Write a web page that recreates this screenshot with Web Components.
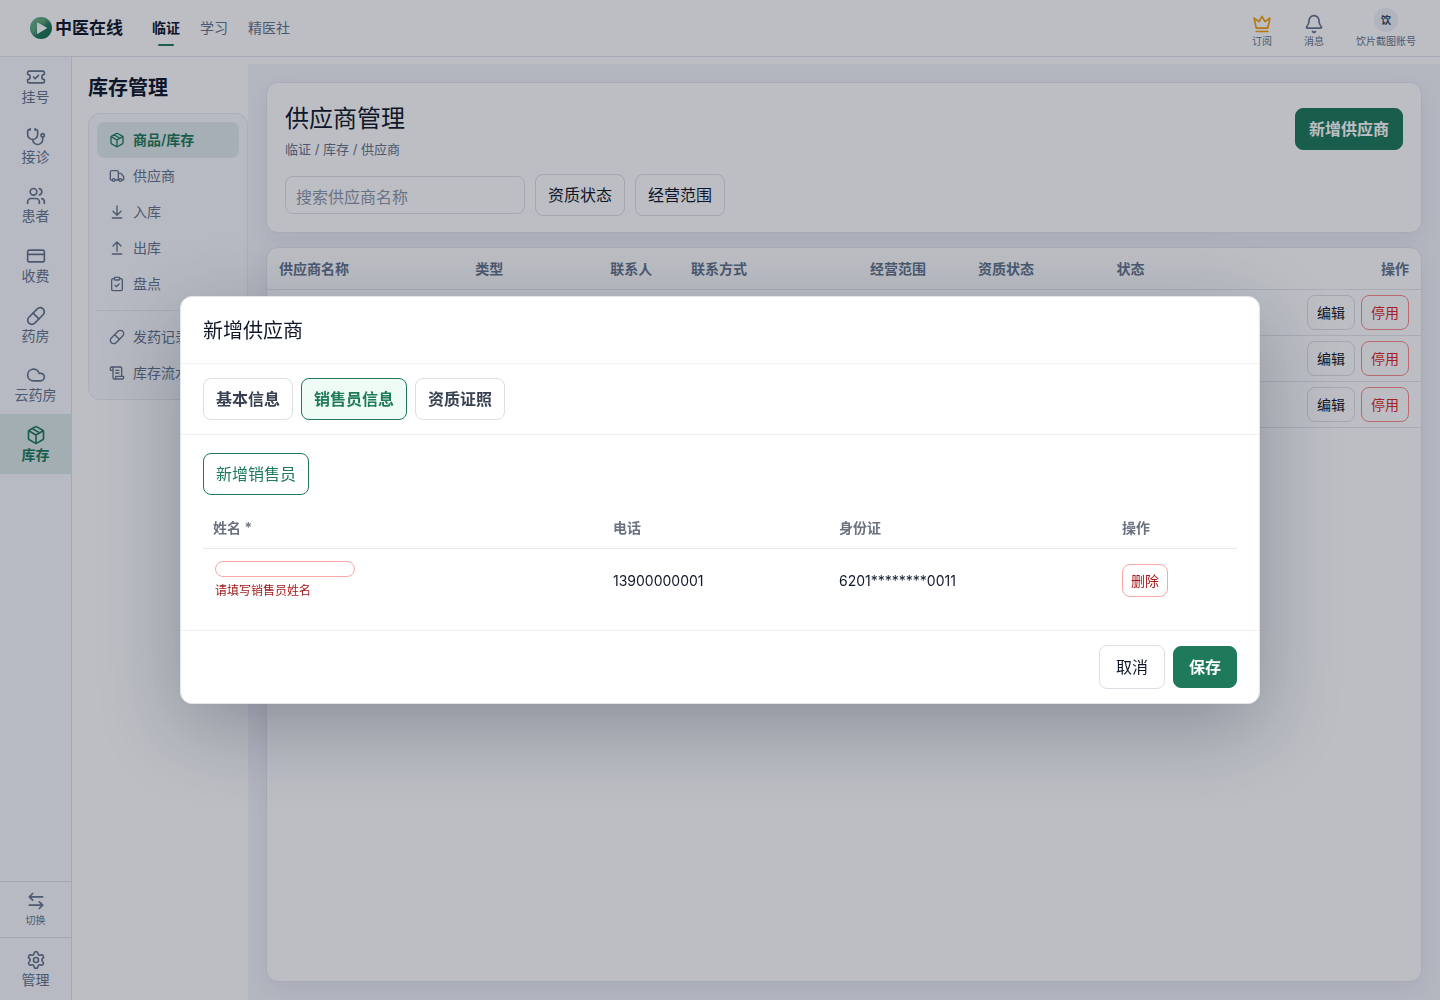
<!DOCTYPE html>
<html lang="zh-CN">
<head>
<meta charset="utf-8">
<title>供应商管理</title>
<style>
html,body{margin:0;background:#fff}
body{font-family:Inter,"Noto Sans CJK SC",sans-serif;font-size:14px;color:#0f172a}
</style>
</head>
<body>
<app-shell></app-shell>
<script>
const ICONS={
ticket:'<path d="M2 9a3 3 0 0 1 0 6v2a2 2 0 0 0 2 2h16a2 2 0 0 0 2-2v-2a3 3 0 0 1 0-6V7a2 2 0 0 0-2-2H4a2 2 0 0 0-2 2Z"/><path d="m9 12 2 2 4-4"/>',
stethoscope:'<path d="M11 2v2M5 2v2M5 3H4a2 2 0 0 0-2 2v4a6 6 0 0 0 12 0V5a2 2 0 0 0-2-2h-1M8 15a6 6 0 0 0 12 0v-3"/><circle cx="20" cy="10" r="2"/>',
users:'<path d="M16 21v-2a4 4 0 0 0-4-4H6a4 4 0 0 0-4 4v2M16 3.128a4 4 0 0 1 0 7.744M22 21v-2a4 4 0 0 0-3-3.87"/><circle cx="9" cy="7" r="4"/>',
card:'<rect x="2" y="5" width="20" height="14" rx="2"/><path d="M2 10h20"/>',
pill:'<path d="m10.5 20.5 10-10a4.95 4.95 0 1 0-7-7l-10 10a4.95 4.95 0 1 0 7 7Z"/><path d="m8.5 8.5 7 7"/>',
cloud:'<path d="M17.5 19H9a7 7 0 1 1 6.71-9h1.79a4.5 4.5 0 1 1 0 9Z"/>',
box:'<path d="M11 21.73a2 2 0 0 0 2 0l7-4A2 2 0 0 0 21 16V8a2 2 0 0 0-1-1.73l-7-4a2 2 0 0 0-2 0l-7 4A2 2 0 0 0 3 8v8a2 2 0 0 0 1 1.73z"/><path d="M12 22V12M3.29 7 12 12l8.71-5M7.5 4.27l9 5.15"/>',
truck:'<path d="M14 18V6a2 2 0 0 0-2-2H4a2 2 0 0 0-2 2v11a1 1 0 0 0 1 1h2M15 18H9M19 18h2a1 1 0 0 0 1-1v-3.65a1 1 0 0 0-.22-.624l-3.48-4.35A1 1 0 0 0 17.52 8H14"/><circle cx="17" cy="18" r="2"/><circle cx="7" cy="18" r="2"/>',
down:'<path d="M12 17V3M6 11l6 6 6-6M19 21H5"/>',
up:'<path d="m18 9-6-6-6 6M12 3v14M5 21h14"/>',
clipboard:'<rect x="8" y="2" width="8" height="4" rx="1"/><path d="M16 4h2a2 2 0 0 1 2 2v14a2 2 0 0 1-2 2H6a2 2 0 0 1-2-2V6a2 2 0 0 1 2-2h2M9 14l2 2 4-4"/>',
scroll:'<path d="M15 12h-5M15 8h-5M19 17V5a2 2 0 0 0-2-2H4M8 21h12a2 2 0 0 0 2-2v-1a1 1 0 0 0-1-1H11a1 1 0 0 0-1 1v1a2 2 0 1 1-4 0V5a2 2 0 1 0-4 0v2a1 1 0 0 0 1 1h3"/>',
bell:'<path d="M10.268 21a2 2 0 0 0 3.464 0M3.262 15.326A1 1 0 0 0 4 17h16a1 1 0 0 0 .74-1.673C19.41 13.956 18 12.499 18 8A6 6 0 0 0 6 8c0 4.499-1.411 5.956-2.738 7.326"/>',
crown:'<path d="M12 2.800l3.600 6.400 5.900-4.200-2.600 12H5.100L2.500 5l5.900 4.200z"/><path d="M5 21h14"/>',
swap:'<path d="M8 3 4 7l4 4M4 7h16M16 21l4-4-4-4M20 17H4"/>',
gear:'<path d="M9.671 4.136a2.34 2.34 0 0 1 4.659 0 2.34 2.34 0 0 0 3.319 1.915 2.34 2.34 0 0 1 2.33 4.033 2.34 2.34 0 0 0 0 3.831 2.34 2.34 0 0 1-2.33 4.033 2.34 2.34 0 0 0-3.319 1.915 2.34 2.34 0 0 1-4.659 0 2.34 2.34 0 0 0-3.32-1.915 2.34 2.34 0 0 1-2.33-4.033 2.34 2.34 0 0 0 0-3.831A2.34 2.34 0 0 1 6.35 6.051a2.34 2.34 0 0 0 3.319-1.915"/><circle cx="12" cy="12" r="3"/>'
};
function define(name,html){
  customElements.define(name,class extends HTMLElement{
    connectedCallback(){
      if(this.shadowRoot)return;
      const t=document.createElement('template');
      t.innerHTML=typeof html==='function'?html(this):html;
      this.attachShadow({mode:'open'}).append(t.content.cloneNode(true));
    }
  });
}

define('line-icon',el=>`<style>
:host{display:block;flex:none;width:var(--icon,20px);height:var(--icon,20px)}
svg{display:block;width:100%;height:100%;fill:none;stroke:currentColor;stroke-width:${el.getAttribute('weight')||2};stroke-linecap:round;stroke-linejoin:round}
</style><svg viewBox="0 0 24 24" aria-hidden="true">${ICONS[el.getAttribute('name')]}</svg>`);

/* Button: kinds are plain, primary, outline, danger, remove; sizes md, lg, sm, xs */
define('ui-button',`<style>
:host{display:block;flex:none}
button{display:block;box-sizing:border-box;margin:0;font:inherit;font-size:16px;line-height:24px;padding:8px 12px;border:1px solid #dcdfe6;border-radius:8px;background:#fff;color:#0f172a;white-space:nowrap}
:host([kind=primary]) button{border-color:#1e7a5a;background:#1e7a5a;color:#fff;font-weight:700;padding:8px 13px}
:host([kind=outline]) button{border-color:#1e7a5a;color:#1e7a5a}
:host([kind=danger]) button{border-color:#f98c8c;color:#dc2626}
:host([kind=remove]) button{border-color:#fca5a5;color:#a31b1b}
:host([size=lg]) button{padding:9px 16px}
:host([kind=primary][size=lg]) button{padding:8px 15px}
:host([size=sm]) button{font-size:14px;line-height:21px;padding:6px 9px}
:host([size=xs]) button{font-size:14px;line-height:21px;padding:5px 8px}
:host([tab]) button{font-weight:600;color:#374151}
:host([tab][on]) button{border-color:#1e7a5a;background:#effcf5;color:#1e7a5a}
</style><button type="button"><slot></slot></button>`);

define('brand-logo',`<style>
:host{display:flex;align-items:center;gap:3px;font-size:17px;font-weight:600;line-height:24px;margin-right:29px}
svg{display:block;width:22px;height:22px}
</style><svg viewBox="0 0 22 22" aria-hidden="true">
<defs><linearGradient id="g" x1="0" y1="0" x2="1" y2="1"><stop offset="0" stop-color="#6fbf9b"/><stop offset=".4" stop-color="#4ea37e"/><stop offset=".6" stop-color="#1e7a5a"/><stop offset="1" stop-color="#176a4d"/></linearGradient></defs>
<circle cx="11" cy="11" r="11" fill="url(#g)"/><path d="M7.500 6v10.400L16.500 11z" fill="#fff" stroke="#fff" stroke-width="1" stroke-linejoin="round"/>
<g fill="#f59e0b"><circle cx="4" cy="7" r=".6"/><circle cx="3" cy="10" r=".6"/><circle cx="5" cy="12" r=".6"/><circle cx="3.500" cy="14" r=".6"/><circle cx="7" cy="4" r=".6"/><circle cx="10" cy="3" r=".6"/><circle cx="13" cy="3" r=".6"/><circle cx="5.500" cy="16" r=".6"/><circle cx="5.500" cy="9" r=".5"/><circle cx="14.500" cy="5" r=".5"/></g>
</svg><span><slot></slot></span>`);

define('top-link',`<style>
:host{display:block}
a{display:block;position:relative;font-size:14px;line-height:56px;color:#64748b;text-decoration:none}
:host([on]) a{color:#0f172a;font-weight:700}
:host([on]) a::after{content:"";position:absolute;left:6px;right:6px;bottom:10px;height:2px;border-radius:1px;background:#1e7a5a}
</style><a href="#"><slot></slot></a>`);

define('top-action',`<style>
:host{display:block}
button{display:flex;flex-direction:column;align-items:center;margin:0;padding:0;border:0;background:none;font:inherit;font-size:10px;line-height:14px;color:#64748b}
.mark{display:flex;align-items:flex-end;height:26px;color:#64748b}
:host([gold]) .mark{color:#f59e0b}
</style><button type="button"><span class="mark"><slot name="mark"></slot></span><span><slot></slot></span></button>`);

define('user-avatar',`<style>
:host{display:flex;align-items:center;justify-content:center;width:24px;height:24px;margin-bottom:2px;border-radius:50%;background:#eef2f7;color:#334155;font-size:10px;font-weight:700;line-height:14px}
</style><slot></slot>`);

define('top-bar',`<style>
:host{display:block;border-bottom:1px solid #dfe5ee;background:#fff}
header{display:flex;align-items:center;justify-content:space-between;height:56px;padding:0 24px 0 30px}
.left,nav,.right{display:flex;align-items:center}
nav{gap:20px}
.right{gap:32px}
</style><header><div class="left"><brand-logo>中医在线</brand-logo>
<nav><top-link on>临证</top-link><top-link>学习</top-link><top-link>精医社</top-link></nav></div>
<div class="right">
<top-action gold><line-icon slot="mark" name="crown"></line-icon>订阅</top-action>
<top-action><line-icon slot="mark" name="bell"></line-icon>消息</top-action>
<top-action><user-avatar slot="mark">饮</user-avatar>饮片截图账号</top-action>
</div></header>`);

define('rail-item',el=>`<style>
:host{display:grid}
a{display:flex;flex-direction:column;align-items:center;justify-content:center;gap:1px;font-size:14px;line-height:18px;color:#64748b;text-decoration:none}
:host([on]) a{background:rgba(30,122,90,.13);color:#1e7a5a;font-weight:600}
:host([small]) a{font-size:10px;line-height:16px}
</style><a href="#"><line-icon name="${el.getAttribute('icon')}"></line-icon><span><slot></slot></span></a>`);

define('side-rail',`<style>
:host{display:flex;flex-direction:column;justify-content:space-between;width:71px;flex:none;border-right:1px solid #dde3ec;background:#f8fafc}
.main{display:grid;grid-auto-rows:1fr;min-height:417px}
.foot rail-item{border-top:1px solid #dbe2eb}
.foot rail-item:first-child{height:55px}
.foot rail-item:last-child{height:62px}
</style><nav class="main">
<rail-item icon="ticket">挂号</rail-item><rail-item icon="stethoscope">接诊</rail-item><rail-item icon="users">患者</rail-item><rail-item icon="card">收费</rail-item><rail-item icon="pill">药房</rail-item><rail-item icon="cloud">云药房</rail-item><rail-item icon="box" on>库存</rail-item></nav>
<nav class="foot"><rail-item icon="swap" small>切换</rail-item><rail-item icon="gear">管理</rail-item></nav>`);

define('menu-item',el=>`<style>
:host{display:block;--icon:16px}
a{display:flex;align-items:center;gap:8px;height:36px;padding:0 12px;border-radius:8px;font-size:14px;line-height:20px;color:#64748b;text-decoration:none}
:host([on]) a{background:rgba(30,122,90,.11);color:#1e7a5a;font-weight:600}
</style><a href="#"><line-icon name="${el.getAttribute('icon')}"></line-icon><span><slot></slot></span></a>`);

define('side-menu',`<style>
:host{display:block;box-sizing:border-box;width:176px;flex:none;padding:16px 0 0 16px;background:#fff}
h2{margin:0 0 10px;font-size:20px;line-height:30px;font-weight:600}
nav{padding:8px;border:1px solid #e6eaf0;border-radius:12px;background:#f9fafc}
hr{margin:8px 0;border:0;height:1px;background:#e2e8f0}
</style><h2>库存管理</h2><nav>
<menu-item icon="box" on>商品/库存</menu-item><menu-item icon="truck">供应商</menu-item><menu-item icon="down">入库</menu-item><menu-item icon="up">出库</menu-item><menu-item icon="clipboard">盘点</menu-item>
<hr><menu-item icon="pill">发药记录</menu-item><menu-item icon="scroll">库存流水</menu-item></nav>`);

define('page-card',`<style>
:host{display:block;border:1px solid #e2e5ee;border-radius:12px;background:#fff;box-shadow:0 8px 24px rgba(15,23,42,.06);overflow:hidden}
</style><slot></slot>`);

define('supplier-toolbar',`<style>
:host{display:block;padding:16px 18px}
.head{display:flex;align-items:center;justify-content:space-between;margin-bottom:15px}
h1{margin:0;padding-top:2px;font-size:24px;line-height:36px;font-weight:400}
p{margin:2px 0 0;font-size:13px;line-height:20px;color:#64748b}
.filters{display:flex;align-items:center;gap:10px}
input{box-sizing:border-box;width:240px;height:38px;margin:0;padding:3px 10px 0;border:1px solid #dcdfe6;border-radius:8px;background:#fff;font:inherit;font-size:16px;color:#0f172a}
input::placeholder{color:#8e98a8;opacity:1}
</style><div class="head"><div><h1>供应商管理</h1><p>临证 / 库存 / 供应商</p></div><ui-button kind="primary">新增供应商</ui-button></div>
<div class="filters"><input type="search" aria-label="搜索供应商名称" placeholder="搜索供应商名称"><ui-button>资质状态</ui-button><ui-button>经营范围</ui-button></div>`);

define('supplier-table',()=>{
const row='<tr>'+'<td></td>'.repeat(7)+'<td><div class="ops"><ui-button size="sm">编辑</ui-button><ui-button size="sm" kind="danger">停用</ui-button></div></td></tr>';
return `<style>
:host{display:block}
table{width:100%;table-layout:fixed;border-collapse:separate;border-spacing:0}
th,td{box-sizing:border-box;padding:0 12px;border-bottom:1px solid #e5e7ee;text-align:left}
th{height:42px;font-size:14px;line-height:20px;font-weight:600;color:#64748b}
th:last-child{text-align:right}
td{height:46px}
.ops{display:flex;justify-content:flex-end;gap:6px}
</style><table><colgroup><col style="width:17%"><col style="width:135px"><col style="width:7%"><col style="width:179px"><col style="width:108px"><col style="width:12%"><col style="width:12%"><col></colgroup>
<thead><tr><th>供应商名称</th><th>类型</th><th>联系人</th><th>联系方式</th><th>经营范围</th><th>资质状态</th><th>状态</th><th>操作</th></tr></thead>
<tbody>${row.repeat(3)}</tbody></table>`;});

define('supplier-dialog',`<style>
:host{display:block;box-sizing:border-box;width:75%;border:1px solid #e2e5ea;border-radius:12px;background:#fff;box-shadow:0 24px 80px rgba(15,23,42,.28)}
h2{margin:0;padding:19px 22px 17px;font-size:20px;line-height:30px;font-weight:400;border-bottom:1px solid #eef0f4}
.tabs{display:flex;gap:8px;padding:14px 22px;border-bottom:1px solid #eef0f4}
.body{padding:18px 22px}
.add{display:flex;margin-bottom:12px}
table{width:100%;table-layout:fixed;border-collapse:separate;border-spacing:0}
th,td{box-sizing:border-box;padding:0 10px;text-align:left;font-size:14px;line-height:20px}
th{height:42px;font-weight:600;color:#6b7280;border-bottom:1px solid #e5e7eb}
td{height:63px}
td:first-child{padding-left:12px}
input{display:block;box-sizing:border-box;width:140px;height:16px;margin:0 0 5px;padding:0 8px;border:1px solid #fca5a5;border-radius:8px;background:#fff;font:inherit}
small{display:block;font-size:12px;line-height:18px;color:#a31b1b}
footer{display:flex;align-items:center;justify-content:flex-end;gap:8px;padding:14px 22px;border-top:1px solid #eef0f4}
</style><h2>新增供应商</h2>
<div class="tabs"><ui-button tab>基本信息</ui-button><ui-button tab on>销售员信息</ui-button><ui-button tab>资质证照</ui-button></div>
<div class="body"><div class="add"><ui-button kind="outline">新增销售员</ui-button></div>
<table><colgroup><col style="width:400px"><col style="width:226px"><col style="width:283px"><col></colgroup>
<thead><tr><th>姓名 *</th><th>电话</th><th>身份证</th><th>操作</th></tr></thead>
<tbody><tr><td><input type="text" aria-label="姓名" aria-invalid="true"><small>请填写销售员姓名</small></td><td>13900000001</td><td>6201********0011</td><td><ui-button size="xs" kind="remove">删除</ui-button></td></tr></tbody></table></div>
<footer><ui-button size="lg">取消</ui-button><ui-button size="lg" kind="primary">保存</ui-button></footer>`);

define('app-shell',`<style>
:host{display:block}
.page{display:flex;flex-direction:column;height:calc(100vh - 1px)}
.cols{display:flex;flex:1;min-height:0}
main{flex:1;min-width:0;display:flex;flex-direction:column;gap:14px;box-sizing:border-box;margin-top:7px;padding:18px;background:#f3f5fa}
main page-card:last-child{flex:1}
.mask{position:fixed;inset:0 0 1px;display:flex;align-items:center;justify-content:center;background:rgba(15,23,42,.28)}
</style><div class="page"><top-bar></top-bar><div class="cols"><side-rail></side-rail><side-menu></side-menu>
<main><page-card><supplier-toolbar></supplier-toolbar></page-card><page-card><supplier-table></supplier-table></page-card></main></div></div>
<div class="mask"><supplier-dialog role="dialog" aria-modal="true" aria-label="新增供应商"></supplier-dialog></div>`);
</script>
</body>
</html>
